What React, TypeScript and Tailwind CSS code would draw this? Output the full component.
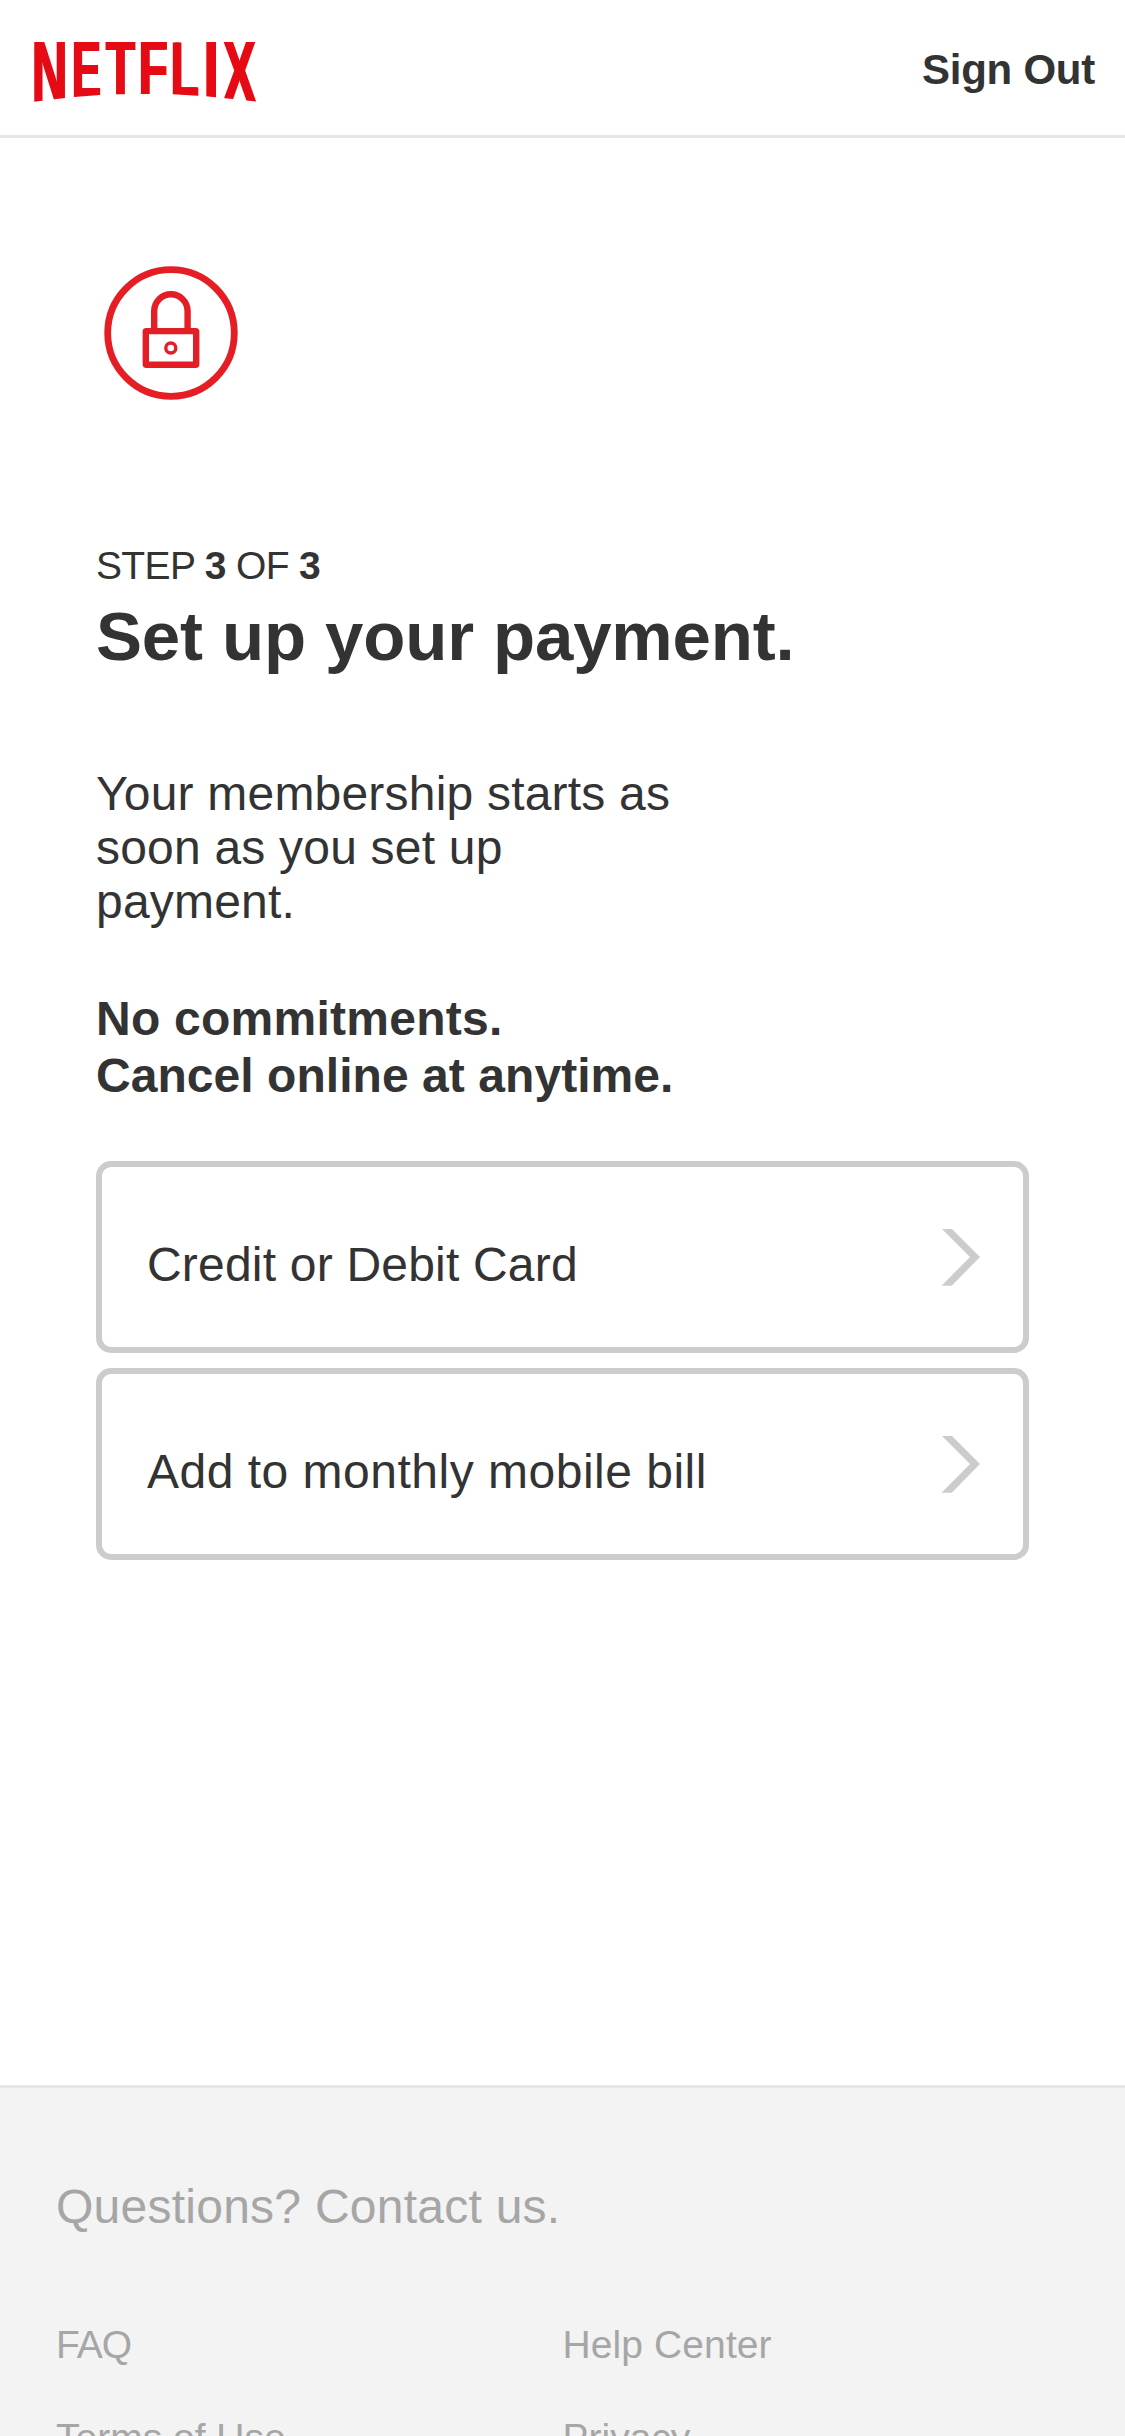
interface Letter {
  char: string;
  x: number;
  width: number;
  bottom: number;
  inkLeft: number;
  inkWidth: number;
}

interface PaymentOptionProps {
  label: string;
  className?: string;
}

// inkLeft / inkWidth are the bold glyph metrics at 100px
const letters: Letter[] = [
  { char: "N", x: 34.3, width: 30.7, bottom: 102, inkLeft: 6.7, inkWidth: 58.8 },
  { char: "E", x: 74, width: 26, bottom: 97, inkLeft: 6.7, inkWidth: 55.5 },
  { char: "T", x: 106, width: 29, bottom: 95, inkLeft: 2.05, inkWidth: 57 },
  { char: "F", x: 141, width: 26.3, bottom: 95, inkLeft: 6.7, inkWidth: 51.3 },
  { char: "L", x: 172.7, width: 25.6, bottom: 96, inkLeft: 6.7, inkWidth: 51.5 },
  { char: "I", x: 206.3, width: 9.7, bottom: 98, inkLeft: 6.7, inkWidth: 14.4 },
  { char: "X", x: 223, width: 33, bottom: 102, inkLeft: 1.5, inkWidth: 63.7 },
];

const links = [
  { label: "FAQ", className: "tracking-[-1px]" },
  { label: "Help Center", className: "tracking-[0.1px]" },
  { label: "Terms of Use", className: "" },
  { label: "Privacy", className: "" },
];

const Logo: React.FC = () => (
  <svg width="260" height="135" viewBox="0 0 260 135" fill="#e60a14" role="img" aria-label="Netflix">
    <defs>
      <clipPath id="arc">
        <path d="M30 42H260V102L223 98L206 96.2L173 94.2L154 94L120 94.2L100 95L74 97L65 98L34 101.7H30Z" />
      </clipPath>
      <filter id="thicken" filterUnits="userSpaceOnUse" x="0" y="0" width="270" height="135" colorInterpolationFilters="sRGB">
        <feOffset in="SourceGraphic" dx="2" result="shifted" />
        <feMerge>
          <feMergeNode in="SourceGraphic" />
          <feMergeNode in="shifted" />
        </feMerge>
      </filter>
    </defs>
    <g clipPath="url(#arc)">
      <g filter="url(#thicken)" fontSize="100" fontWeight="700">
        {letters.map((l) => {
          const sx = (l.width - 2) / l.inkWidth;
          const sy = (l.bottom - 42) / 68.8;
          return (
            <text
              key={l.char}
              transform={`translate(${l.x - l.inkLeft * sx} ${l.bottom}) scale(${sx} ${sy})`}
            >
              {l.char}
            </text>
          );
        })}
      </g>
    </g>
  </svg>
);

const LockIcon: React.FC = () => (
  <svg width="150" height="150" viewBox="0 0 150 150" fill="none" stroke="#e51e26">
    <circle cx="75" cy="75" r="63.3" strokeWidth="6.8" />
    <path d="M58.2 73V53a16.7 16.7 0 0 1 33.4 0V73" strokeWidth="6.4" />
    <rect x="49.8" y="73.1" width="50.4" height="33.6" rx="0.5" strokeWidth="6.4" strokeLinejoin="round" />
    <circle cx="74.8" cy="90" r="5" strokeWidth="3.4" />
  </svg>
);

const PaymentOption: React.FC<PaymentOptionProps> = ({ label, className }) => {
  return (
    <button className="flex h-48 w-full items-center justify-between rounded-[15px] border-6 border-[#ccc] pr-[43px] pl-[45px] text-left">
      <span className={`pt-[15px] text-[48px] leading-[54px] ${className ?? ""}`}>{label}</span>
      <svg width="39" height="57" viewBox="0 0 39 57" fill="#ccc">
        <path d="M1 0H11L39 28L10.7 56.7H.5L29 28Z" />
      </svg>
    </button>
  );
};

export default function App() {
  return (
    <div className="flex h-[2436px] w-[1125px] flex-col overflow-hidden bg-white font-['Liberation_Sans',Arial,sans-serif] text-[#333]">
      <header className="flex h-[138px] shrink-0 items-center justify-between border-b-3 border-[#e6e6e6] pr-[30px]">
        <Logo />
        <a className="pt-[5px] text-[42px] leading-[48px] font-bold tracking-[-0.25px]">Sign Out</a>
      </header>

      <main className="flex-1 px-24 pt-[120px]">
        <LockIcon />
        <p className="mt-[135px] text-[39px] leading-[46px] tracking-[-0.65px]">
          STEP <b>3</b> OF <b>3</b>
        </p>
        <h1 className="mt-[8px] text-[69px] leading-[80px] font-bold tracking-[-0.15px]">Set up your payment.</h1>
        <p className="mt-[90px] w-[600px] text-[48px] leading-[54px] tracking-[0.2px]">
          Your membership starts as
          <br />
          soon as you set up
          <br />
          payment.
        </p>
        <p className="mt-[61px] text-[48px] leading-[57px] font-bold">
          <span className="tracking-[0.25px]">No commitments.</span>
          <br />
          <span className="tracking-[0.05px]">Cancel online at anytime.</span>
        </p>
        <div className="mt-[57px] flex flex-col gap-[15px]">
          <PaymentOption label="Credit or Debit Card" className="tracking-[0.2px]" />
          <PaymentOption label="Add to monthly mobile bill" className="tracking-[0.5px]" />
        </div>
      </main>

      <footer className="h-[351px] shrink-0 border-t-3 border-[#e6e6e6] bg-[#f3f3f3] px-14 pt-[92px] text-[#a6a6a6]">
        <a className="block text-[48px] leading-[54px] tracking-[0.25px]">Questions? Contact us.</a>
        <div className="mt-[88px] grid grid-cols-2 gap-y-[47px] text-[39px] leading-[46px]">
          {links.map((link) => (
            <a key={link.label} className={link.className}>
              {link.label}
            </a>
          ))}
        </div>
      </footer>
    </div>
  );
}
